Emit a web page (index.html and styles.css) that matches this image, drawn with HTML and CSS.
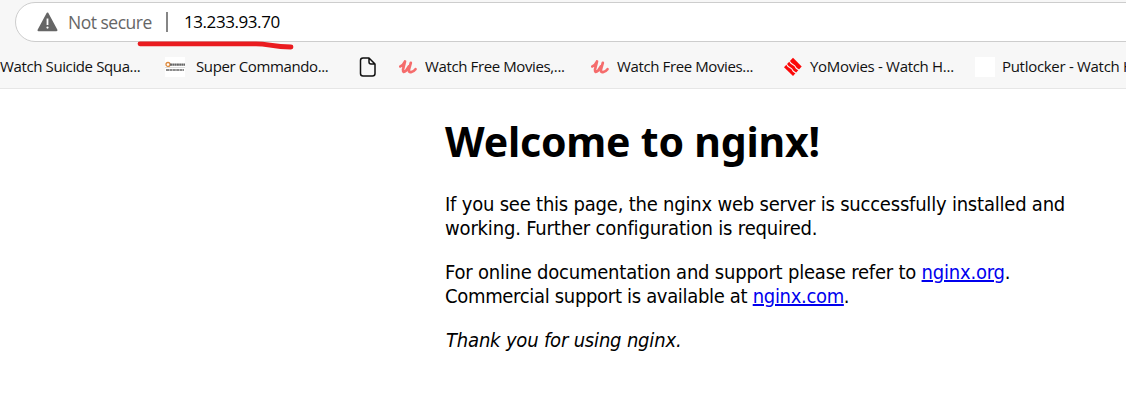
FILE: index.html
```html
<!DOCTYPE html>
<html lang="en">
<head>
<meta charset="utf-8">
<title>Welcome to nginx!</title>
<link rel="stylesheet" href="styles.css">
</head>
<body>
<header class="chrome">
  <div class="address">
    <svg class="warning" width="21" height="20" viewBox="0 0 21 20"><path d="M10.5 1.5 19.5 18.2H1.5Z" fill="#666" stroke="#666" stroke-width="2" stroke-linejoin="round"/><path d="M10.5 6.5v6.5" stroke="#fff" stroke-width="1.8"/><circle cx="10.5" cy="15.6" r="1.1" fill="#fff"/></svg>
    <span class="security">Not secure</span>
    <span class="divider"></span>
    <span class="url">13.233.93.70</span>
  </div>
  <svg class="marker" width="158" height="12" viewBox="0 0 158 12"><path d="M3 4.8H119C132 4.8 135 8 154 8" fill="none" stroke="#ea1c20" stroke-width="4.8" stroke-linecap="round" stroke-linejoin="round"/></svg>
  <nav class="bookmarks">
    <a class="bookmark first"><span class="label">Watch Suicide Squa...</span></a>
    <a class="bookmark super"><svg width="20" height="20" viewBox="0 0 20 20"><path fill="#fff" d="M0 0h20v20H0z"/><circle cx="3" cy="7.5" r="2" fill="none" stroke="#dd8a3e" stroke-width="1.3"/><path d="M5 7.6h15" stroke="#666" stroke-width="2.2" stroke-dasharray="2 .3"/><path d="M1 13h18" stroke="#666" stroke-width="1.5" stroke-dasharray="3 .4"/><path d="M0 10.5h20" stroke="#ddd"/></svg><span class="label">Super Commando...</span></a>
    <a class="bookmark page"><svg width="18" height="20" viewBox="0 0 18 20"><path d="M4 1H10L16 7V16.5Q16 19 13.5 19H4Q1.5 19 1.5 16.5V3.5Q1.5 1 4 1ZM10 1V5Q10 7 12 7H16" fill="none" stroke="#111" stroke-width="1.5" stroke-linejoin="round"/></svg></a>
    <a class="bookmark free-one"><svg width="20" height="20" viewBox="0 0 20 20"><path d="M2.3 9.4Q5.5 8 7 4.5L5 12.5Q4.7 16.7 8.2 13.5L10.8 9.5M12.8 5.8L11 12.5Q10.7 16 13.4 15Q16 14.2 17.5 12.2" fill="none" stroke="#f56c6c" stroke-width="2.7" stroke-linecap="round" stroke-linejoin="round"/></svg><span class="label">Watch Free Movies,...</span></a>
    <a class="bookmark free-two"><svg width="20" height="20" viewBox="0 0 20 20"><path d="M2.3 9.4Q5.5 8 7 4.5L5 12.5Q4.7 16.7 8.2 13.5L10.8 9.5M12.8 5.8L11 12.5Q10.7 16 13.4 15Q16 14.2 17.5 12.2" fill="none" stroke="#f56c6c" stroke-width="2.7" stroke-linecap="round" stroke-linejoin="round"/></svg><span class="label">Watch Free Movies...</span></a>
    <a class="bookmark yo"><svg width="20" height="20" viewBox="0 0 20 20"><path d="M10 .8 18.7 9.5 10 19 1 10.2Z" fill="#fb0808"/><path d="M6.2 3.7 8 6.3 11.7 8.8 13.3 11.3 16.2 13.3M3.3 6.7 5 9.3 8.7 11.8 10.3 14.3 13.2 16.3" fill="none" stroke="#f7f7f7" stroke-width="1.1"/></svg><span class="label">YoMovies - Watch H...</span></a>
    <a class="bookmark put"><span class="blank"></span><span class="label">Putlocker - Watch H...</span></a>
  </nav>
</header>
<main class="content">
  <h1 class="title">Welcome to nginx!</h1>
  <p class="text"><span>If you see this page, the nginx web server is successfully installed and</span><br><span class="second-line">working. Further configuration is required.</span></p>
  <p class="text">For online documentation and support please refer to <a class="link" href="#">nginx.org</a>.<br><span class="commercial">Commercial support is available at <a class="link" href="#">nginx.com</a>.</span></p>
  <p class="text"><em class="thanks">Thank you for using nginx.</em></p>
</main>
</body>
</html>
```
FILE: styles.css
```css
* { box-sizing: border-box; }
body { margin: 0; height: 413px; overflow: hidden; background: #fff; color: #000; }
.chrome { position: relative; height: 89px; padding-top: 2px; background: #f7f7f7; border-bottom: 1px solid #e6e6e6; overflow: hidden; font-family: "Open Sans", "Noto Sans", sans-serif; }
.address { display: flex; align-items: center; width: 1150px; height: 40px; margin-left: 15px; padding-left: 21px; background: #fff; border: 1px solid #cdcdcd; border-radius: 20px; white-space: nowrap; }
.warning { flex: none; }
.security { width: 98px; margin-left: 10px; padding-bottom: 1px; color: #666; font-size: 17.5px; letter-spacing: -.5px; }
.divider { width: 2px; height: 20px; background: #868686; }
.url { margin-left: 16px; padding-bottom: 2px; font-size: 17px; letter-spacing: -.43px; }
.marker { position: absolute; left: 137px; top: 39px; }
.bookmarks { display: flex; align-items: center; width: 1180px; height: 46px; padding-top: 4px; font-size: 15px; white-space: nowrap; }
.bookmark { display: flex; align-items: center; flex: none; color: #111; }
.bookmark svg, .blank { flex: none; }
.label { letter-spacing: -.38px; padding-bottom: 2px; }
.first { width: 165px; }
.super { width: 194px; gap: 11px; }
.page { width: 39px; }
.free-one, .free-two { gap: 7px; }
.free-one { width: 192px; }
.free-two { width: 193px; }
.yo { width: 192px; gap: 7px; }
.yo .label { letter-spacing: -.3px; }
.put { gap: 7px; }
.put .label { letter-spacing: -.3px; }
.blank { width: 20px; height: 20px; background: #fff; }
.content { width: 660px; margin-left: 445px; padding-top: 28px; font-family: "DejaVu Sans Condensed", "DejaVu Sans", sans-serif; font-stretch: condensed; white-space: nowrap; }
.title { margin: 0 0 27px; font-family: "Noto Sans", "Open Sans", sans-serif; font-size: 41px; line-height: 48px; font-weight: bold; letter-spacing: -.2px; }
.text { margin: 0 0 20px; font-size: 20px; line-height: 24px; letter-spacing: -.21px; }
.second-line { letter-spacing: -.17px; }
.commercial { letter-spacing: -.32px; }
.thanks { margin-left: 1px; letter-spacing: -.18px; }
.link { color: #0000ee; text-decoration: underline; }
```
